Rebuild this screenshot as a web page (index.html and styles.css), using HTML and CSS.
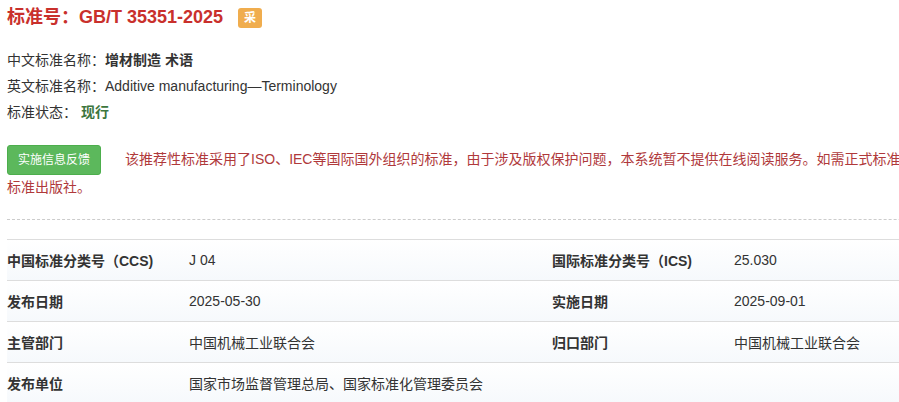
FILE: index.html
```html
<!DOCTYPE html>
<html lang="zh-CN">
<head>
<meta charset="utf-8">
<title>GB/T 35351-2025</title>
<link rel="stylesheet" href="styles.css">
</head>
<body>
<div class="page">
  <h4 class="title">标准号：GB/T 35351-2025 <span class="badge">采</span></h4>

  <div class="info">
    <div class="info-line">中文标准名称：<b>增材制造 术语</b></div>
    <div class="info-line">英文标准名称：Additive manufacturing—Terminology</div>
    <div class="info-line">标准状态： <span class="status">现行</span></div>
  </div>

  <div class="notice">
    <button class="btn-feedback" type="button">实施信息反馈</button><span class="notice-text">该推荐性标准采用了ISO、IEC等国际国外组织的标准，由于涉及版权保护问题，本系统暂不提供在线阅读服务。如需正式标准出版物，请联系中国标准出版社。</span>
  </div>

  <hr class="dashed">

  <div class="table">
    <div class="row">
      <div class="cell label">中国标准分类号（CCS)</div>
      <div class="cell value">J 04</div>
      <div class="cell label">国际标准分类号（ICS)</div>
      <div class="cell value">25.030</div>
    </div>
    <div class="row">
      <div class="cell label">发布日期</div>
      <div class="cell value">2025-05-30</div>
      <div class="cell label">实施日期</div>
      <div class="cell value">2025-09-01</div>
    </div>
    <div class="row">
      <div class="cell label">主管部门</div>
      <div class="cell value">中国机械工业联合会</div>
      <div class="cell label">归口部门</div>
      <div class="cell value">中国机械工业联合会</div>
    </div>
    <div class="row">
      <div class="cell label">发布单位</div>
      <div class="cell value wide">国家市场监督管理总局、国家标准化管理委员会</div>
    </div>
  </div>
</div>
</body>
</html>
```
FILE: styles.css
```css
html, body {
  margin: 0;
  padding: 0;
  overflow: hidden;
  background: #fff;
}
body {
  font-family: "Liberation Sans", "Noto Sans CJK SC", sans-serif;
  font-size: 14px;
  color: #333;
}
.page {
  width: 1090px;
  padding-left: 7px;
}
.title {
  margin: 0;
  font-size: 18px;
  line-height: 34px;
  font-weight: bold;
  color: #c9302c;
}
.badge {
  display: inline-block;
  margin-left: 10px;
  width: 24px;
  height: 20px;
  line-height: 20px;
  text-align: center;
  font-size: 12px;
  font-weight: bold;
  color: #fff;
  background: #f0ad4e;
  border-radius: 3px;
  vertical-align: 1px;
}
.info {
  margin-top: 13px;
}
.info-line {
  line-height: 26px;
}
.info-line b {
  font-weight: bold;
}
.status {
  color: #3c763d;
  font-weight: bold;
}
.notice {
  width: 1030px;
  margin-top: 20px;
  line-height: 24px;
}
.btn-feedback {
  display: inline-block;
  vertical-align: middle;
  margin: 0 24px 0 0;
  padding: 5px 10px;
  height: 30px;
  font-family: "Liberation Sans", "Noto Sans CJK SC", sans-serif;
  font-size: 12px;
  line-height: 18px;
  color: #fff;
  background: #5cb85c;
  border: 1px solid #4cae4c;
  border-radius: 3px;
}
.notice-text {
  color: #b0393b;
}
.dashed {
  margin: 20px 0 0;
  border: 0;
  border-top: 1px dashed #ccc;
  height: 0;
}
.table {
  margin-top: 19px;
  border-top: 1px solid #ddd;
}
.row {
  display: grid;
  grid-template-columns: 182px 363px 182px 363px;
  height: 40px;
  border-bottom: 1px solid #ddd;
  background: linear-gradient(#fff, #f6f9fc);
}
.cell {
  display: flex;
  align-items: center;
}
.label {
  font-weight: bold;
}
.wide {
  grid-column: 2 / 5;
}
```
